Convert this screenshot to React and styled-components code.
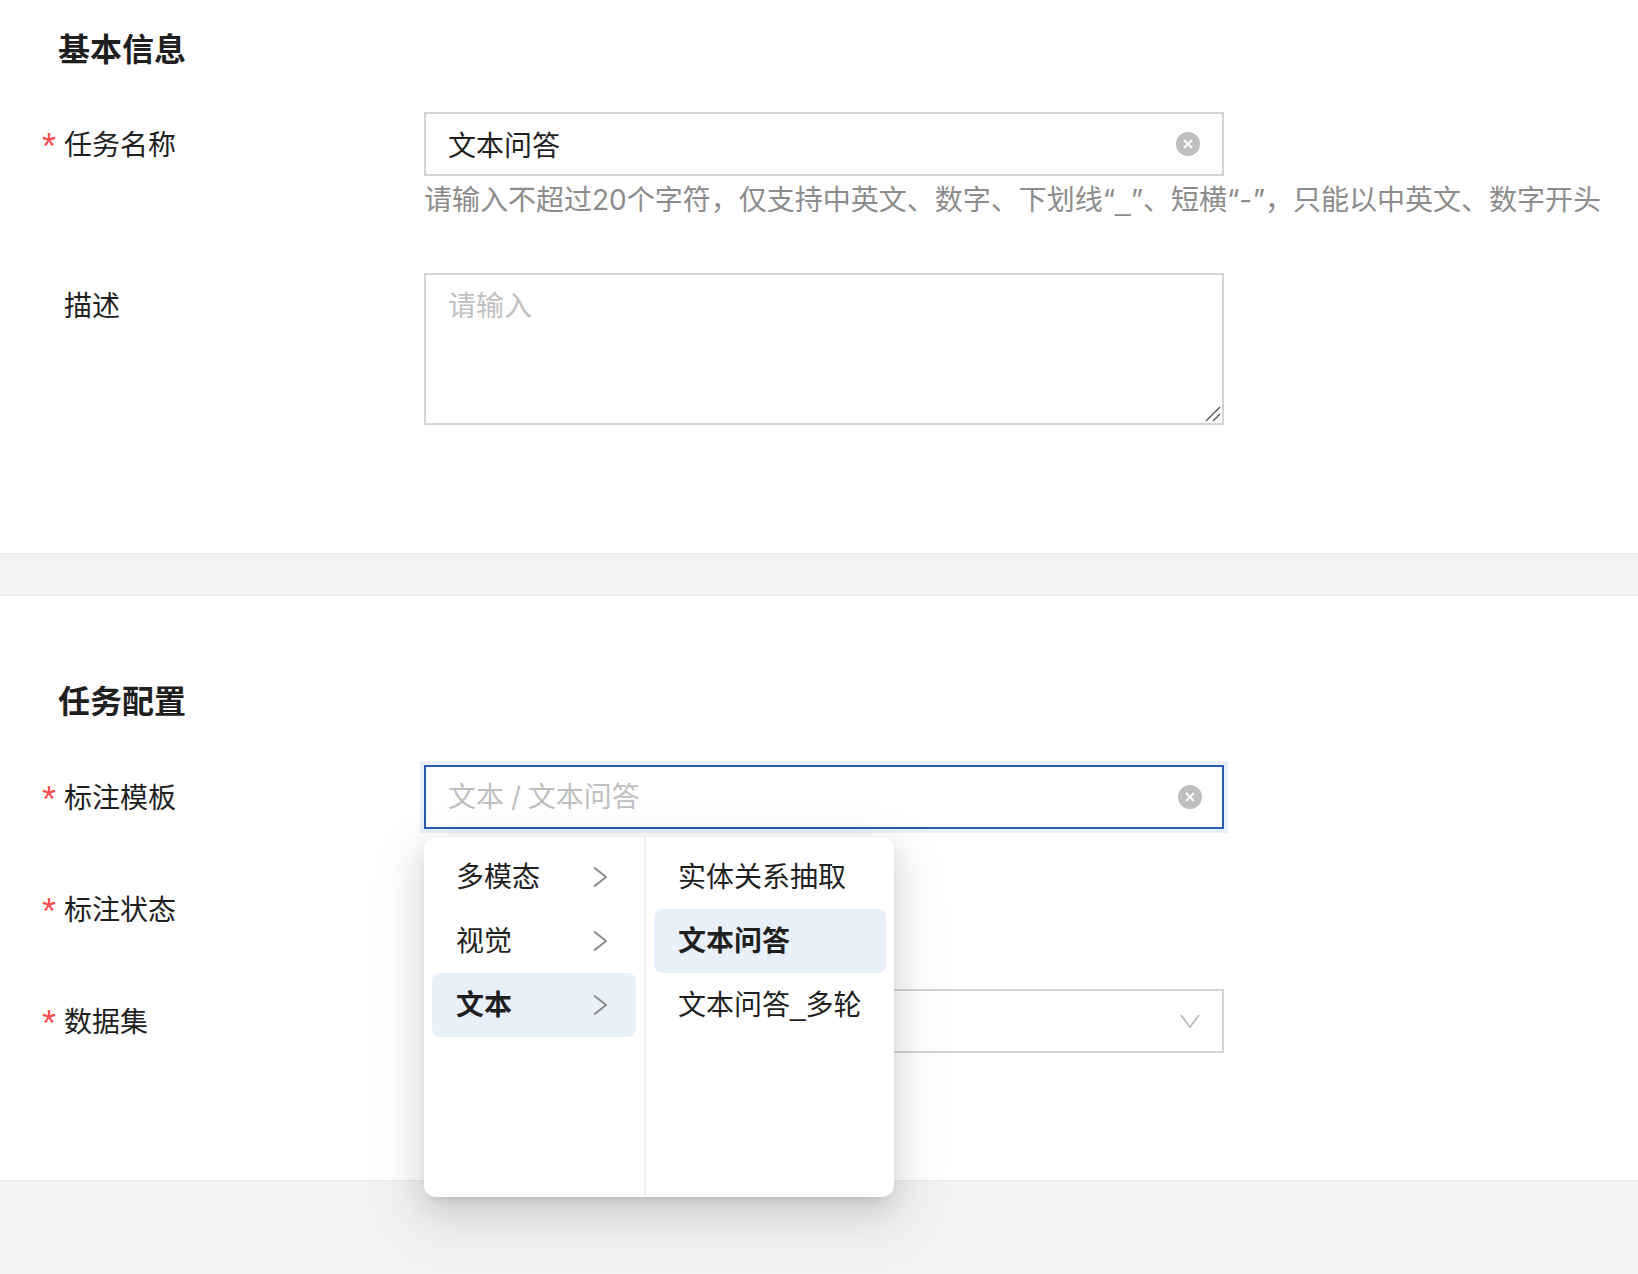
import React from 'react'
import styled, { createGlobalStyle } from 'styled-components'

const GlobalStyle = createGlobalStyle`
  html, body {
    margin: 0;
    padding: 0;
    background: #f2f2f2;
  }
  body {
    font-family: Inter, "Noto Sans CJK SC", sans-serif;
    color: #1f1f1f;
  }
`

const Page = styled.div`
  width: 1638px;
  height: 1274px;
  overflow: hidden;
`

const Section = styled.section`
  background: #fff;
  box-sizing: border-box;
  height: ${({ height }) => height}px;
  margin-top: ${({ top }) => top || 0}px;
  padding-top: ${({ pad }) => pad}px;
  border-top: ${({ top }) => (top ? '1px solid #ebebeb' : 'none')};
  border-bottom: 1px solid #ebebeb;
`

const Title = styled.h2`
  margin: 0 0 ${({ gap }) => gap}px;
  padding-left: 58px;
  font-size: 32px;
  line-height: 48px;
  font-weight: 700;
  color: #1f1f1f;
`

const Row = styled.div`
  display: grid;
  grid-template-columns: 424px 800px;
  margin-bottom: ${({ gap }) => gap ?? 48}px;
`

const Label = styled.label`
  display: flex;
  align-items: center;
  box-sizing: border-box;
  height: 64px;
  padding: 0 0 3px 42px;
  font-size: 28px;
  color: #1f1f1f;
`

const Star = styled.span`
  width: 22px;
  height: 28px;
  color: #ff4d4f;
  font-size: 36px;
  line-height: 36px;
  font-family: "Liberation Sans", sans-serif;
`

const Field = styled.div`
  position: relative;
  min-width: 0;
`

const Box = styled.div`
  box-sizing: border-box;
  display: flex;
  align-items: center;
  height: 64px;
  padding: 0 22px;
  background: #fff;
  border: 2px solid ${({ focused }) => (focused ? '#2a5cb8' : '#d4d4d4')};
  box-shadow: ${({ focused }) => (focused ? '0 0 0 4px #e8f0fa' : 'none')};
`

const Input = styled.input`
  flex: 1;
  min-width: 0;
  padding: 0 0 1px;
  border: none;
  outline: none;
  background: transparent;
  font: inherit;
  font-size: 28px;
  word-spacing: -1px;
  color: #1f1f1f;
  &::placeholder {
    color: #bfbfbf;
    opacity: 1;
  }
`

const TextArea = styled.textarea`
  display: block;
  box-sizing: border-box;
  width: 800px;
  height: 152px;
  padding: 11px 22px;
  border: 2px solid #d4d4d4;
  outline: none;
  resize: none;
  background: #fff;
  font: inherit;
  font-size: 28px;
  line-height: 40px;
  &::placeholder {
    color: #bfbfbf;
    opacity: 1;
  }
`

const Grip = styled.svg`
  position: absolute;
  right: 3px;
  bottom: 3px;
  width: 16px;
  height: 16px;
`

const Help = styled.div`
  padding-top: 2px;
  font-size: 28px;
  line-height: 44px;
  color: #8c8c8c;
  white-space: nowrap;
`

const Under = styled.span`
  font-family: "Liberation Sans", sans-serif;
`

const Dash = styled.span`
  letter-spacing: 0.5px;
`

const ClearButton = styled.span`
  flex: none;
  display: flex;
  align-items: center;
  justify-content: center;
  width: 24px;
  height: 24px;
  margin-right: ${({ shift }) => shift}px;
  border-radius: 50%;
  background: #bfbfbf;
`

const Arrow = styled.span`
  flex: none;
  display: flex;
  align-items: center;
  justify-content: center;
  width: 24px;
  height: 24px;
  margin-right: -2px;
`

const Menu = styled.div`
  position: absolute;
  left: 0;
  top: 72px;
  z-index: 5;
  display: flex;
  width: 470px;
  height: 360px;
  background: #fff;
  border-radius: 12px;
  box-shadow: 0 12px 32px 0 rgba(0, 0, 0, 0.12), 0 6px 12px -8px rgba(0, 0, 0, 0.2),
    0 18px 56px 16px rgba(0, 0, 0, 0.06);
`

const MenuColumn = styled.ul`
  box-sizing: border-box;
  width: ${({ width }) => width}px;
  margin: 0;
  padding: 8px;
  list-style: none;
  & + & {
    border-left: 2px solid #f0f0f0;
  }
`

const MenuItem = styled.li`
  display: flex;
  align-items: center;
  justify-content: space-between;
  height: 64px;
  padding: 0 29px 0 24px;
  border-radius: 8px;
  font-size: 28px;
  white-space: nowrap;
  color: #1f1f1f;
  background: ${({ active }) => (active ? '#e8f0fa' : 'transparent')};
  font-weight: ${({ active }) => (active ? 700 : 400)};
`

const MenuText = styled.span`
  position: relative;
  top: -2px;
`

const ClearIcon = () => (
  <svg width="12" height="12" viewBox="0 0 12 12" fill="none">
    <path d="M2 2l8 8M10 2l-8 8" stroke="#fff" strokeWidth="1.8" />
  </svg>
)

const ChevronRight = () => (
  <svg width="14" height="22" viewBox="0 0 14 22" fill="none">
    <path d="M1 1.5L13 11L1 20.5" stroke="#8c8c8c" strokeWidth="2" />
  </svg>
)

const ChevronDown = () => (
  <svg width="20" height="14" viewBox="0 0 20 14" fill="none">
    <path d="M1 1L10 13L19 1" stroke="#bfbfbf" strokeWidth="2" />
  </svg>
)

const parents = ['多模态', '视觉', '文本']
const children = [
  { key: 'relation', text: '实体关系抽取' },
  { key: 'qa', text: '文本问答' },
  { key: 'multi', text: '文本问答', suffix: '多轮' },
]

export default function App() {
  return (
    <Page>
      <GlobalStyle />
      <Section height={554} pad={26}>
        <Title gap={38}>基本信息</Title>
        <Row gap={50}>
          <Label>
            <Star>*</Star>任务名称
          </Label>
          <Field>
            <Box>
              <Input readOnly value="文本问答" />
              <ClearButton shift={0}>
                <ClearIcon />
              </ClearButton>
            </Box>
            <Help>
              请输入不超过20个字符，仅支持中英文、数字、下划线“<Under>_</Under>”、短横“<Dash>-</Dash>”，只能以中英文、数字开头
            </Help>
          </Field>
        </Row>
        <Row gap={0}>
          <Label>
            <Star />
            描述
          </Label>
          <Field>
            <TextArea readOnly placeholder="请输入" />
            <Grip viewBox="0 0 16 16" fill="none">
              <path d="M1 15L15 1M8 15l7-7" stroke="#555" strokeWidth="1.4" />
            </Grip>
          </Field>
        </Row>
      </Section>
      <Section height={586} pad={82} top={41}>
        <Title gap={39}>任务配置</Title>
        <Row>
          <Label>
            <Star>*</Star>标注模板
          </Label>
          <Field>
            <Box focused>
              <Input readOnly placeholder="文本 / 文本问答" />
              <ClearButton shift={-2}>
                <ClearIcon />
              </ClearButton>
            </Box>
            <Menu>
              <MenuColumn width={220}>
                {parents.map((name) => (
                  <MenuItem key={name} active={name === '文本'}>
                    <MenuText>{name}</MenuText>
                    <ChevronRight />
                  </MenuItem>
                ))}
              </MenuColumn>
              <MenuColumn width={250}>
                {children.map((item) => (
                  <MenuItem key={item.key} active={item.key === 'qa'}>
                    <MenuText>
                      {item.text}
                      {item.suffix && (
                        <>
                          <Under>_</Under>
                          {item.suffix}
                        </>
                      )}
                    </MenuText>
                  </MenuItem>
                ))}
              </MenuColumn>
            </Menu>
          </Field>
        </Row>
        <Row>
          <Label>
            <Star>*</Star>标注状态
          </Label>
        </Row>
        <Row gap={0}>
          <Label>
            <Star>*</Star>数据集
          </Label>
          <Field>
            <Box>
              <Input readOnly />
              <Arrow>
                <ChevronDown />
              </Arrow>
            </Box>
          </Field>
        </Row>
      </Section>
    </Page>
  )
}
